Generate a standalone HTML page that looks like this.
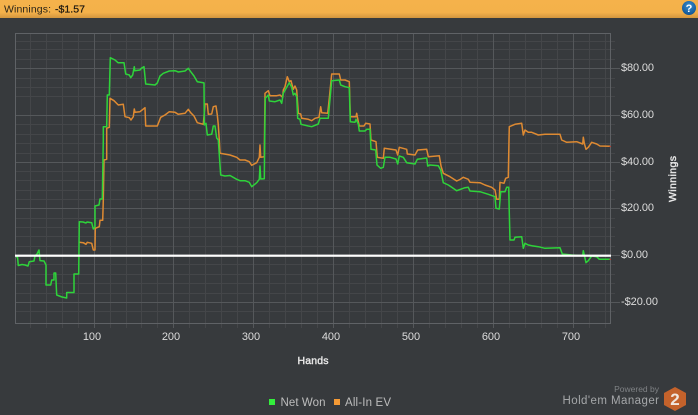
<!DOCTYPE html>
<html><head><meta charset="utf-8"><style>
html,body{margin:0;padding:0;background:#373a3d;width:698px;height:415px;overflow:hidden}
svg{display:block}
text{font-family:"Liberation Sans",sans-serif}
</style></head><body>
<svg width="698" height="415" viewBox="0 0 698 415" xmlns="http://www.w3.org/2000/svg">
<defs>
<linearGradient id="bar" x1="0" y1="0" x2="0" y2="1"><stop offset="0" stop-color="#f5b24b"/><stop offset=".7" stop-color="#f4b14a"/><stop offset="1" stop-color="#d2963e"/></linearGradient>
<radialGradient id="help" cx=".5" cy=".35" r=".7"><stop offset="0" stop-color="#3a8fd0"/><stop offset="1" stop-color="#0d4f8e"/></radialGradient>
</defs>
<rect width="698" height="415" fill="#373a3d"/>
<rect width="698" height="18" fill="url(#bar)"/>
<text x="4" y="12.5" font-size="10.5" fill="#2a2418" textLength="47">Winnings:</text>
<text x="55" y="12.5" font-size="10.5" fill="#1d1810" stroke="#1d1810" stroke-width=".25" textLength="30">-$1.57</text>
<circle cx="689" cy="8" r="7" fill="url(#help)"/>
<text x="689" y="12" font-size="11" font-weight="bold" fill="#fff" text-anchor="middle">?</text>

<path fill="none" stroke="#444649" stroke-width="1" d="M15 41.5H615M15 49.5H615M15 59.5H615M15 78.5H615M15 87.5H615M15 96.5H615M15 124.5H615M15 134.5H615M15 143.5H615M15 153.5H615M15 171.5H615M15 180.5H615M15 190.5H615M15 199.5H615M15 218.5H615M15 227.5H615M15 236.5H615M15 246.5H615M15 264.5H615M15 274.5H615M15 283.5H615M15 293.5H615M15 311.5H615
M30.5 33V328M46.5 33V328M62.5 33V328M78.5 33V328M110.5 33V328M126.5 33V328M141.5 33V328M157.5 33V328M189.5 33V328M205.5 33V328M221.5 33V328M237.5 33V328M269.5 33V328M285.5 33V328M301.5 33V328M317.5 33V328M349.5 33V328M365.5 33V328M381.5 33V328M397.5 33V328M429.5 33V328M445.5 33V328M461.5 33V328M477.5 33V328M509.5 33V328M525.5 33V328M541.5 33V328M557.5 33V328M589.5 33V328M605.5 33V328"/>
<path fill="none" stroke="#55585b" stroke-width="1" d="M15 68.5H620M15 115.5H620M15 162.5H620M15 208.5H620M15 255.5H620M15 302.5H620
M94.5 33V328M173.5 33V328M253.5 33V328M333.5 33V328M413.5 33V328M493.5 33V328M573.5 33V328"/>
<rect x="15.5" y="33.5" width="595" height="290" fill="none" stroke="#5f6266" stroke-width="1"/>

<polyline fill="none" stroke="#de8a32" stroke-width="1.5" stroke-linejoin="round" points="79.3,242.3 83.3,242.7 86,244.3 87.3,242.3 91.7,243.3 93.3,250 95,250 95.3,228.3 99.3,226.7 100,220.3 102.7,220.3 103.3,200 104,160 106.7,159.3 106.7,128.3 109.3,127.3 110,98.3 114,100.7 118.3,105 123.3,104.3 125,116.7 129.3,117.7 131,120 133.3,116.7 134.3,109 135,112.3 140,111.7 145,107.7 145.7,126 157.3,126 160.7,117.3 165,115 169.3,111.7 175,112.3 178.3,114.3 185,113.3 188.3,109.3 190.7,112.7 194,116 197.3,122.7 203.3,124.3 205,104 207.3,104 208.3,114.3 211.7,114 213.3,106.7 216,106 217.3,115 218.3,125 219.3,140 220,153.3 230,155 236.7,157.3 240,160 245,160 249.3,161.7 251.7,165.3 256.7,162.7 259.3,157.3 260,145 260.7,157.3 264.3,156.7 265,93.3 268.3,90.7 270,95.7 276.7,95.7 280,95 282.7,97.3 283.3,90 285,86.7 287.3,76.7 289.3,81.7 291,80.7 293.3,89.3 295,86 296.7,90 298.3,113.3 300.7,114 301.7,118.3 308.3,119.3 311.7,120.7 315,118.3 319,117.3 320.7,106.7 321.7,112.7 327.7,113.3 329.3,98.3 331.7,74 339.3,74 340.7,80 345,80 349.3,81.7 350.3,116.7 356,116.7 356.7,113.3 358.3,121.7 359.3,126 364,126 365.7,123.3 370,124 371,140 376,141.7 377.3,157.3 383.3,158.3 384.3,148.3 391,149.3 396,150 397.7,155 399.3,147.3 406.7,149.3 407.3,154 415,155 417.7,150 426.7,149.3 428.3,156.7 439.3,155.7 441,166 443.3,173.3 450,176.7 456.7,181 460,179.5 463.3,177.3 468.3,179.3 470,182.3 480,182.7 485,185 491.7,187.3 495,190 496.7,199.3 499.3,199.3 500,182.3 504,183.3 505.7,178.3 508.3,177.3 509,140 509.3,126.7 515,124.3 521.7,123.3 523.3,135 525,130 528.3,132.3 531.7,132.3 538.3,135 545,134.3 560,134.3 561.7,140 566.7,142.3 576.7,141.7 582.7,144 583.3,137.3 584.3,143.3 586,149.3 588.3,147.3 591.7,142.3 596.7,144 600,146 610,146.3"/>

<polyline fill="none" stroke="#2ed33a" stroke-width="1.5" stroke-linejoin="round" points="16,257 17.5,257 18.3,265.5 22,264.5 25,265 28,266 29.3,261.7 34,261 35,256 37,254 39,250 40,260.6 44,261 46,265 46,285 50.7,285 51.7,280 54,280 54,273 55.7,273 56.3,287 56.7,295 62,297 66.7,298 66.7,292.5 74,292.5 74,274 78.7,274 79.3,221.7 83,222 86,223 87,222 91.7,222.7 93.3,229 95,227 95,206 99,205 100,199 102.3,199 103.3,140 103.3,126.7 106.7,126.7 107.3,95 109.3,95 110.3,57.7 115,60 118,62.7 124,62.7 125.7,74 129.3,75 130.7,77.7 132.7,75 134.3,66.7 134.7,70.7 140,70 141.3,68.3 144,66.7 145.7,84 155,85 157.3,83 160,76 163.3,73.3 169.3,71 175,70.7 178.3,72 185,71 188.3,68.3 190.7,71.7 194,76 197.3,81.7 203.3,82.7 204,83 204.3,125 206,123.3 207.3,135 211.7,134.3 213.3,126 215,126 216.7,138 218.3,140 219.3,155 220.7,175 225,176 230,175.5 236.7,179.3 240,180.7 245,180.7 249.3,182.3 251.7,186.7 256.7,182.7 259.3,179.3 260,166 260.7,179 264.3,178.7 264.7,140 265.3,98.3 268.3,95 269.3,101 275,101.7 280,100 281.7,103.3 283.3,93.3 286.7,87.3 289.3,82.7 291.7,87.3 293.3,95 295,93.3 296.7,96.7 297.7,118.3 300,119.3 301,124.3 308.3,126 311.7,126.7 318.3,124 320,118.3 328.3,118.3 329.3,106.7 331.7,80.7 339.3,80 340.7,85 345,86.7 349.3,87.7 350.3,121.7 355,122.3 356,119.3 358.3,124 359.3,131 365,131 366.7,129.3 370,129.3 371,149.3 375.7,150 377,165 380.7,168.3 383.3,167.3 385,157.3 390,157.3 396,159 397.7,164 399.3,156 403.3,157.3 406.7,162.7 415,164 417.3,159.3 426.7,158 427.7,166 430,165 438.3,165.7 440.7,170 443.3,182.7 448.3,185 451.7,187.3 456.7,190.7 460,189.5 465,187.7 468.3,187.3 470,191 480,191.7 488.3,194.3 495,196.7 496,208.3 499.3,209 500.7,191.7 505,191.7 506.7,187.3 508.7,187.3 509.3,213.3 510,240 514,240 515,237.3 521.7,236.7 523.3,248.3 525,243.3 528.3,245 531.7,245.7 538.3,246.7 545,248.3 560,247.7 562.3,254 571.7,255 582.7,255.7 583.3,250.7 584.3,255 586,262.7 588.3,260.7 591.7,256 596.7,256.7 599.3,259.3 610,259.3"/>

<rect x="15" y="254.6" width="596" height="2.2" fill="#fff"/>
<rect x="609.5" y="146" width="1.2" height="1" fill="#e03020"/>
<rect x="609.5" y="259" width="1.2" height="1" fill="#e03020"/>

<g font-size="11" fill="#dcdcdc">
<text x="621" y="71" textLength="33">$80.00</text>
<text x="621" y="118" textLength="33">$60.00</text>
<text x="621" y="165" textLength="33">$40.00</text>
<text x="621" y="211" textLength="33">$20.00</text>
<text x="621" y="258" textLength="27">$0.00</text>
<text x="621" y="305" textLength="37">-$20.00</text>
</g>
<g font-size="11" fill="#dcdcdc" text-anchor="middle">
<text x="92" y="340">100</text>
<text x="171" y="340">200</text>
<text x="251" y="340">300</text>
<text x="331" y="340">400</text>
<text x="411" y="340">500</text>
<text x="491" y="340">600</text>
<text x="571" y="340">700</text>
</g>
<text x="297.5" y="364" font-size="10.5" fill="#e8e8e8" stroke="#e8e8e8" stroke-width=".4" textLength="31">Hands</text>
<text transform="translate(676,202) rotate(-90)" font-size="10.5" fill="#e8e8e8" stroke="#e8e8e8" stroke-width=".4" textLength="46">Winnings</text>

<rect x="269" y="399" width="6" height="6" fill="#33ee3c"/>
<text x="280.5" y="406" font-size="11.5" fill="#bdbdbd" textLength="45">Net Won</text>
<rect x="334" y="399" width="6" height="6" fill="#f59a35"/>
<text x="345" y="406" font-size="11.5" fill="#bdbdbd" textLength="46">All-In EV</text>

<text x="659" y="392" font-size="8.5" fill="#7f8285" text-anchor="end">Powered by</text>
<text x="562.5" y="404" font-size="11.5" fill="#a5a7a9" textLength="96.5">Hold'em Manager</text>
<polygon points="675,387 686,393 686,405 675,411 664,405 664,393" fill="#c4622b"/>
<text x="675" y="405" font-size="17" font-weight="bold" fill="#f0e6de" text-anchor="middle">2</text>
</svg>
</body></html>
